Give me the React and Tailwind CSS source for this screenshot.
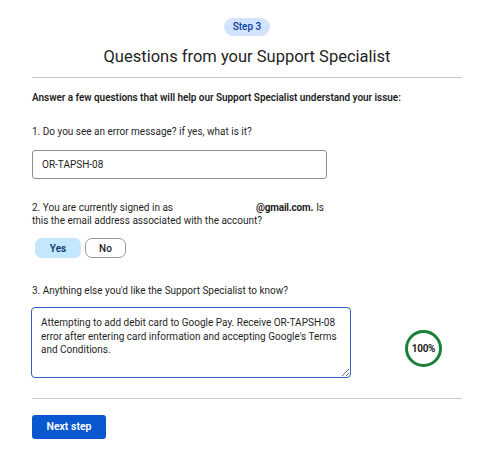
import React from 'react';

const font = { fontFamily: 'Roboto, "Liberation Sans", sans-serif' };

const App = () => {
    return (
        <div className="w-[500px] h-[457px] bg-white text-[#1f1f1f]" style={font}>
            <div className="w-[430px] ml-[32px] pt-[18px]">
                <div className="flex justify-center">
                    <span className="h-[18px] px-[9px] rounded-full bg-[#d3e3fd] text-[#0842a0] text-[10px] leading-[18px] font-medium">
                        Step 3
                    </span>
                </div>
                <h1 className="mt-[11px] text-center text-[16.5px] leading-[20px] text-[#1f1f1f]">
                    Questions from your Support Specialist
                </h1>
                <div className="mt-[10px] border-t border-[#c7c7c7]" />

                <p className="mt-[13px] text-[10px] leading-[14px] font-semibold tracking-[-0.05px]">
                    Answer a few questions that will help our Support Specialist understand your issue:
                </p>

                <p className="mt-[20px] text-[10px] leading-[14px]">
                    1. Do you see an error message? if yes, what is it?
                </p>
                <div className="mt-[11px] w-[295px] h-[29px] border border-[#8e8e8e] rounded-[3px] px-[9px] flex items-center text-[10px]">
                    OR-TAPSH-08
                </div>

                {/* email is redacted in the source, keep the gap */}
                <div className="mt-[22px] text-[10px] leading-[13px]">
                    <div className="flex">
                        <span>2. You are currently signed in as</span>
                        <span className="ml-[83px] font-bold tracking-[-0.2px]">@gmail.com.</span>
                        <span className="ml-[3px]">Is</span>
                    </div>
                    <div>this the email address associated with the account?</div>
                </div>
                <div className="mt-[11px] ml-[3px] flex gap-[4px]">
                    <button className="h-[20px] w-[46px] rounded-[7px] bg-[#c2e7ff] text-[#0b3c6e] text-[10px] font-semibold">
                        Yes
                    </button>
                    <button className="h-[20px] w-[41px] rounded-[7px] border border-[#9a9a9a] bg-white text-[#1f1f1f] text-[10px] font-medium">
                        No
                    </button>
                </div>

                <p className="mt-[26px] text-[10px] leading-[14px]">
                    3. Anything else you'd like the Support Specialist to know?
                </p>
                <div className="mt-[9px] flex items-start">
                    <div className="w-[320px] h-[71px] -ml-[1px] border-[1.5px] border-[#2f63c0] rounded-[4px] pl-[9px] pr-[8px] pt-[8px] text-[10px] leading-[13.5px] resize overflow-auto">
                        Attempting to add debit card to Google Pay. Receive OR-TAPSH-08 error after entering card information and accepting Google's Terms and Conditions.
                    </div>
                    <div className="ml-[54px] mt-[23px] w-[37px] h-[37px] rounded-full border-[3px] border-[#188038] flex items-center justify-center text-[10px] font-bold tracking-[-0.3px]">
                        100%
                    </div>
                </div>

                <div className="mt-[20px] border-t border-[#c7c7c7]" />

                <button className="mt-[16px] w-[74px] h-[24px] rounded-[3px] bg-[#0b57d0] text-white text-[10.5px] font-semibold">
                    Next step
                </button>
            </div>
        </div>
    );
};

export default App;
